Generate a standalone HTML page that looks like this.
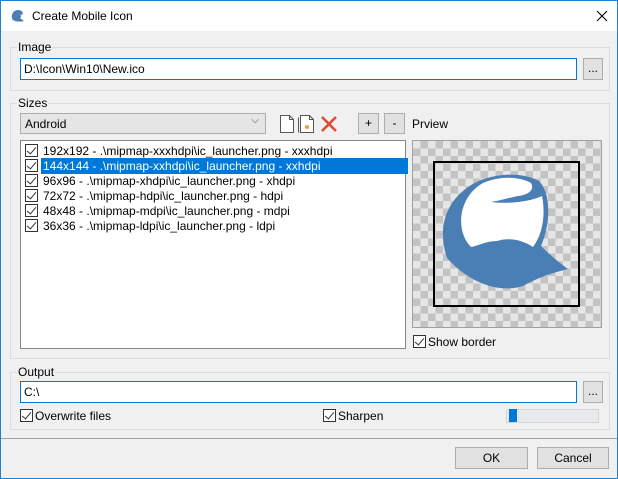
<!DOCTYPE html>
<html><head><style>
*{box-sizing:border-box}
body{margin:0;width:618px;height:479px;overflow:hidden;font-family:"Liberation Sans",sans-serif;font-size:12px;color:#000;background:#f0f0f0}
.win{position:absolute;left:0;top:0;width:618px;height:479px;border:1px solid #1883d7;background:#f0f0f0}
.title{position:absolute;left:0;top:0;width:616px;height:30px;background:#fff}
.a{position:absolute}
.grp{position:absolute;border:1px solid #dcdcdc}
.lbl{position:absolute;background:#f0f0f0;padding:0 1px;font-size:12px}
.tb{position:absolute;background:#fff;border:1px solid #0078d7;padding:3px 3px;font-size:12px}
.btn{position:absolute;background:#e1e1e1;border:1px solid #adadad;text-align:center;font-size:12px}
.cb{position:absolute;width:13px;height:13px;border:1px solid #333;background:#fff}
.cb:after{content:"";position:absolute;left:3px;top:0px;width:4px;height:8px;border:solid #333;border-width:0 1.5px 1.5px 0;transform:rotate(40deg)}
.row{position:absolute;left:4px;height:16px;line-height:16px;white-space:nowrap}
.row .cb{left:0;top:1px}
.row span{position:absolute;left:16px;padding:0 2px}
</style></head><body><div class="win">
<div class="title">
<svg class="a" style="left:9px;top:7px" width="16" height="16" viewBox="0 0 16 16"><path d="M3 12 C0 8 3 2 8 2 C12 2 14 5 12 7 L8 6 C11 6 12 9 10 10 L14 13 C10 14 6 14 3 12Z" fill="#4a7fb5"/></svg>
<div class="a" style="left:31px;top:8px;font-size:12px">Create Mobile Icon</div>
<svg class="a" style="left:595px;top:9px" width="12" height="12" viewBox="0 0 12 12"><path d="M1 1L11 11M11 1L1 11" stroke="#000" stroke-width="1.1"/></svg>
</div>
<div class="grp" style="left:9px;top:46px;width:600px;height:44px"></div>
<div class="lbl" style="left:16px;top:39px">Image</div>
<div class="tb" style="left:19px;top:57px;width:557px;height:22px">D:\Icon\Win10\New.ico</div>
<div class="btn" style="left:582px;top:57px;width:20px;height:22px;line-height:18px">...</div>

<div class="grp" style="left:9px;top:102px;width:600px;height:256px"></div>
<div class="lbl" style="left:16px;top:95px">Sizes</div>
<div class="a" style="left:19px;top:112px;width:246px;height:21px;background:#e5e5e5;border:1px solid #adadad;padding:3px 4px">Android<span style="position:absolute;right:6px;top:1px;font-size:10px;color:#444">⌵</span></div>
<svg class="a" style="left:277px;top:113px" width="62" height="20" viewBox="0 0 62 20">
<path d="M2.5 1.5h9l4 4v13h-13z M11.5 1.5v4h4" fill="#fff" stroke="#555"/>
<path d="M22.5 1.5h9l4 4v13h-13z M31.5 1.5v4h4 M20.5 3.5v15" fill="#fff" stroke="#555"/>
<circle cx="29" cy="13" r="2" fill="#f0a020"/>
<path d="M44 3l14 14M58 3L44 17" stroke="#e04b30" stroke-width="2.6"/>
</svg>
<div class="btn" style="left:357px;top:112px;width:21px;height:21px;line-height:19px">+</div>
<div class="btn" style="left:383px;top:112px;width:21px;height:21px;line-height:19px">-</div>
<div class="a" style="left:411px;top:116px">Prview</div>

<div class="a" style="left:19px;top:139px;width:386px;height:209px;background:#fff;border:1px solid #828790">
<div class="row" style="top:2px"><div class="cb"></div><span>192x192 - .\mipmap-xxxhdpi\ic_launcher.png - xxxhdpi</span></div>
<div class="row" style="top:17px"><div class="cb"></div><span style="background:#0078d7;color:#fff;width:367px">144x144 - .\mipmap-xxhdpi\ic_launcher.png - xxhdpi</span></div>
<div class="row" style="top:32px"><div class="cb"></div><span>96x96 - .\mipmap-xhdpi\ic_launcher.png - xhdpi</span></div>
<div class="row" style="top:47px"><div class="cb"></div><span>72x72 - .\mipmap-hdpi\ic_launcher.png - hdpi</span></div>
<div class="row" style="top:62px"><div class="cb"></div><span>48x48 - .\mipmap-mdpi\ic_launcher.png - mdpi</span></div>
<div class="row" style="top:77px"><div class="cb"></div><span>36x36 - .\mipmap-ldpi\ic_launcher.png - ldpi</span></div>
</div>

<div class="a" style="left:411px;top:139px;width:190px;height:188px;border:1px solid #a0a0a0;background-color:#e6e6e6;background-image:linear-gradient(45deg,#c3c3c3 25%,transparent 25%,transparent 75%,#c3c3c3 75%),linear-gradient(45deg,#c3c3c3 25%,transparent 25%,transparent 75%,#c3c3c3 75%);background-size:15px 15px;background-position:0 0,7.5px 7.5px"></div>
<div class="a" style="left:432px;top:160px;width:147px;height:146px;border:2px solid #000"></div>
<svg class="a" style="left:432px;top:160px" width="147" height="146" viewBox="0 0 147 146">
<path d="M14 97 C5 70 10 42 38 24 C58 12 88 10 106 20 C118 32 118 62 108 85 C118 95 128 103 135 108 C118 112 102 118 90 125 C68 132 38 124 14 97Z" fill="#4a7fb5"/>
<path d="M38 86 C22 70 25 36 50 22 C68 14 88 16 98 22 C102 29 95 34 85 35 C75 37 65 40 58 41 C75 43 96 41 109 35 C113 55 109 74 100 86 C90 79 76 76 64 80 C53 80 45 85 38 86Z" fill="#fff"/>
</svg>
<div class="cb" style="left:412px;top:334px"></div>
<div class="a" style="left:427px;top:334px">Show border</div>

<div class="grp" style="left:9px;top:371px;width:600px;height:58px"></div>
<div class="lbl" style="left:16px;top:364px">Output</div>
<div class="tb" style="left:19px;top:380px;width:557px;height:22px">C:\</div>
<div class="btn" style="left:582px;top:380px;width:20px;height:22px;line-height:18px">...</div>
<div class="cb" style="left:19px;top:408px"></div>
<div class="a" style="left:34px;top:408px">Overwrite files</div>
<div class="cb" style="left:322px;top:408px"></div>
<div class="a" style="left:337px;top:408px">Sharpen</div>
<div class="a" style="left:505px;top:408px;width:93px;height:14px;background:#e7eaea;border:1px solid #d6d6d6"></div>
<div class="a" style="left:508px;top:408px;width:8px;height:13px;background:#0078d7"></div>
<div class="a" style="left:0;top:437px;width:616px;height:1px;background:#a0a0a0"></div>
<div class="btn" style="left:454px;top:446px;width:73px;height:22px;line-height:20px">OK</div>
<div class="btn" style="left:536px;top:446px;width:72px;height:22px;line-height:20px">Cancel</div>
</div></body></html>
